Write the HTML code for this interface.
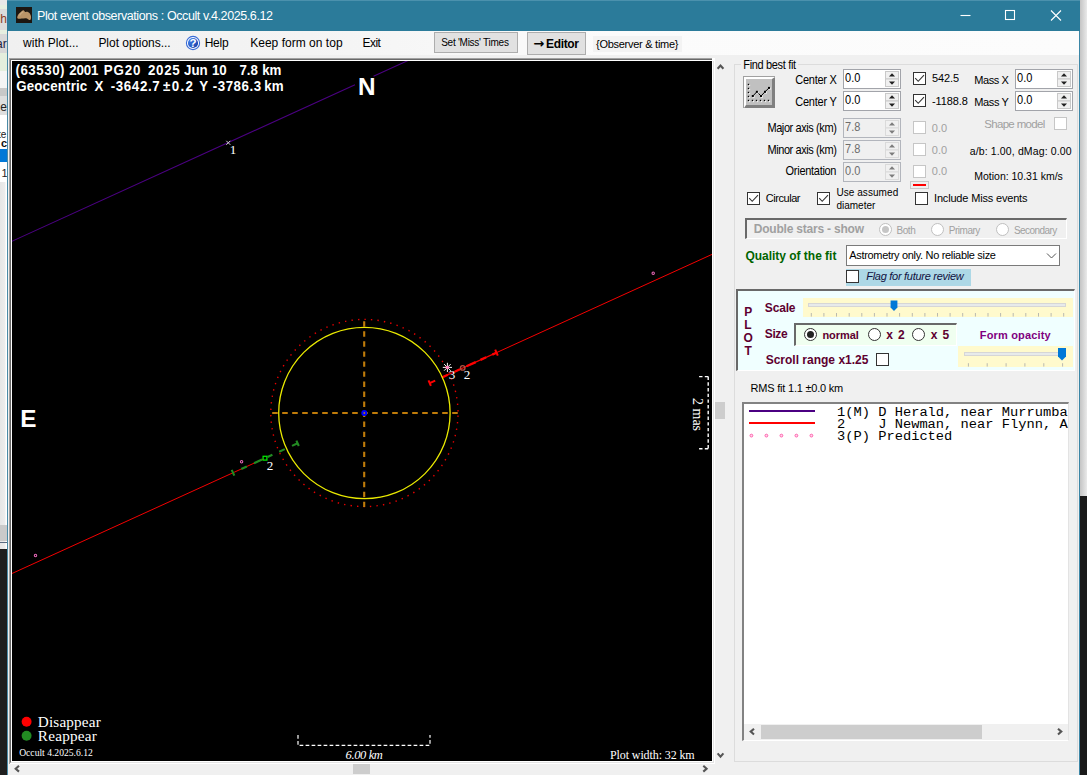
<!DOCTYPE html>
<html lang="en"><head><meta charset="utf-8"><title>Plot event observations : Occult v.4.2025.6.12</title>
<style>
html,body{margin:0;padding:0;background:#fff;}
body{width:1087px;height:783px;overflow:hidden;position:relative;}
#root{position:absolute;left:0;top:0;width:1087px;height:783px;overflow:hidden;background:#fff;}
#root div,#root svg{position:absolute;box-sizing:border-box;}
.t{position:absolute;white-space:pre;line-height:1;color:#000;}
.num{background:#fff;border:1px solid #a2a4aa;}
.num.dis{background:#f0f0f0;border-color:#b2b5bc;}
.cb{width:13px;height:13px;background:#fff;border:1px solid #333;}
.cb.dis{border-color:#c6c6c6;background:#fff;}
.rb{width:13px;height:13px;border-radius:50%;background:#fff;border:1px solid #333;}
.rb.dis{border-color:#c0c0c0;background:#fff;}
.sunk{border-style:solid;border-width:2px 1px 1px 2px;border-color:#696969 #fff #fff #696969;}

</style></head>
<body>
<div id="root">
<!-- neighbouring windows peeking at left / right edges -->
<div style="left:0;top:0;width:8px;height:549px;background:linear-gradient(90deg,#e6e6e6 0,#ececec 5px,#fff 6px,#fff 8px)"></div>
<div style="left:0;top:0;width:7px;height:5px;background:#e8e8e8"></div>
<div style="left:0;top:5px;width:7px;height:4px;background:#e6efe0"></div>
<div style="left:0;top:9px;width:7px;height:21px;background:#dcdcdc"></div>
<div style="left:0;top:30px;width:7px;height:4px;background:#e6efe0"></div>
<div style="left:0;top:34px;width:7px;height:19px;background:#d8d8d8"></div>
<div style="left:0;top:53px;width:7px;height:18px;background:#e4eedd"></div>
<div style="left:0;top:71px;width:7px;height:17px;background:#f4f4f4"></div>
<div style="left:0;top:88px;width:7px;height:8px;background:#c8c8c8"></div>
<div style="left:0;top:96px;width:7px;height:19px;background:#dedede"></div>
<div style="left:0;top:115px;width:7px;height:34px;background:#fff"></div>
<div style="left:0;top:149px;width:7px;height:13px;background:#0078d7"></div>
<div style="left:0;top:162px;width:7px;height:20px;background:#fff"></div>
<span class="t" style='left:-6.5px;top:11.5px;font:12px "Liberation Sans",Arial,sans-serif;color:#8a3b1c'>gh</span>
<span class="t" style='left:-4px;top:37px;font:12px "Liberation Sans",Arial,sans-serif;color:#1c1c40'>ar</span>
<span class="t" style='left:-2.5px;top:100px;font:12px "Liberation Sans",Arial,sans-serif;color:#222'>le</span>
<span class="t" style='left:-2px;top:128.5px;font:10px "Liberation Sans",Arial,sans-serif;color:#222'>te</span>
<span class="t" style='left:1px;top:137px;font:bold 11px "Liberation Sans",Arial,sans-serif;color:#111'>c</span>
<span class="t" style='left:1.5px;top:166.5px;font:11px "Liberation Sans",Arial,sans-serif;color:#222'>1</span>
<div style="left:0;top:525px;width:7px;height:16px;background:#cacaca"></div>
<div style="left:0;top:542px;width:7px;height:1px;background:#5a6a80"></div>
<div style="left:0;top:549px;width:8px;height:226px;background:#1e1e1e"></div>
<div style="left:1080px;top:0;width:7px;height:496px;background:linear-gradient(90deg,#c4c4c4,#e9e9e9)"></div>
<div style="left:1080px;top:496px;width:7px;height:279px;background:#1a1a1a"></div>

<!-- main window -->
<div id="win" style="left:7px;top:0;width:1073px;height:775px;background:#f0f0f0;border-left:1px solid #4a8aa6;border-right:1px solid #3b86a6"></div>
<div id="titlebar" style="left:7px;top:0;width:1073px;height:31px;background:#2b7b9a"></div>
<div id="menubar" style="left:8px;top:31px;width:1071px;height:24px;background:linear-gradient(90deg,#f0f0f0 0,#f4f4f4 300px,#fbfbfb 600px,#fcfcfc 100%)"></div>

<!-- toolbar buttons -->
<div style="left:434px;top:32px;width:84px;height:21px;background:#e1e1e1;border:1px solid #adadad"></div>
<div style="left:527px;top:32px;width:59px;height:23px;background:#e1e1e1;border:1px solid #adadad"></div>
<div style="left:593px;top:36px;width:89px;height:16px;background:#f3f3f3"></div>

<!-- plot picture box -->
<div style="left:9px;top:58px;width:706px;height:706px;background:#fff;border-top:1px solid #a0a0a0;border-left:1px solid #a0a0a0"></div>
<div style="left:10px;top:59px;width:704px;height:704px;background:#fff;border-top:1px solid #696969;border-left:1px solid #696969;border-right:1px solid #e3e3e3;border-bottom:1px solid #e3e3e3"></div>
<div style="left:712px;top:58px;width:3px;height:3px;background:#fff"></div>
<div id="plotbg" style="left:12px;top:61px;width:700px;height:700px;background:#000"></div>
<!-- plot scrollbars -->
<div style="left:715px;top:59px;width:13px;height:705px;background:#f0f0f0"></div>
<div style="left:715px;top:402px;width:10px;height:17px;background:#cdcdcd"></div>
<div style="left:10px;top:764px;width:705px;height:11px;background:#f0f0f0"></div>
<div style="left:353px;top:764px;width:17px;height:10px;background:#cdcdcd"></div>

<!-- group box -->
<div style="left:734px;top:64px;width:344px;height:698px;border:1px solid #dcdcdc"></div>
<div style="left:741px;top:60px;width:57px;height:10px;background:#f0f0f0"></div>

<!-- fit button -->
<div style="left:743px;top:76px;width:32px;height:32px;background:#a0a0a0"></div>
<div style="left:744px;top:77px;width:31px;height:31px;background:#c0c0c0;border-style:solid;border-width:2px 3px 3px 2px;border-color:#fff #808080 #808080 #fff"></div>

<!-- numeric up/downs -->
<div class="num" style="left:843px;top:69px;width:58px;height:20px"></div>
<div class="num" style="left:843px;top:91px;width:58px;height:20px"></div>
<div class="num dis" style="left:843px;top:118px;width:58px;height:20px"></div>
<div class="num dis" style="left:843px;top:140px;width:58px;height:20px"></div>
<div class="num dis" style="left:843px;top:162px;width:58px;height:20px"></div>
<div class="num" style="left:1015px;top:69px;width:58px;height:20px"></div>
<div class="num" style="left:1015px;top:91px;width:58px;height:20px"></div>

<!-- checkboxes -->
<div class="cb" style="left:913px;top:72px"></div>
<div class="cb" style="left:913px;top:94px"></div>
<div class="cb dis" style="left:913px;top:121px"></div>
<div class="cb dis" style="left:913px;top:143px"></div>
<div class="cb dis" style="left:913px;top:165px"></div>
<div class="cb dis" style="left:1054px;top:117px"></div>
<div class="cb" style="left:747px;top:192px"></div>
<div class="cb" style="left:817px;top:192px"></div>
<div class="cb" style="left:915px;top:192px"></div>
<!-- small colour swatch -->
<div style="left:910px;top:181px;width:19px;height:8px;background:#f0f0f0;border:1px solid #c8c8c8"></div>
<div style="left:913px;top:184px;width:13px;height:2px;background:#f00"></div>

<!-- double stars panel -->
<div class="sunk" style="left:745px;top:218px;width:322px;height:21px;background:#f0f0f0"></div>
<div class="rb dis" style="left:879px;top:223px"></div>
<div style="left:882px;top:226px;width:7px;height:7px;border-radius:50%;background:#c6c6c6"></div>
<div class="rb dis" style="left:931px;top:223px"></div>
<div class="rb dis" style="left:996px;top:223px"></div>

<!-- quality combo -->
<div style="left:846px;top:245px;width:214px;height:21px;background:#fff;border:1px solid #7a7a7a"></div>
<div style="left:846px;top:269px;width:125px;height:17px;background:#add8e6"></div>
<div class="cb" style="left:846px;top:270px"></div>

<!-- PLOT panel -->
<div class="sunk" style="left:736px;top:289px;width:339px;height:82px;background:#f0ffff"></div>
<div style="left:803px;top:298px;width:270px;height:19px;background:#fffacd"></div>
<div style="left:808px;top:303px;width:258px;height:4px;background:#e7eaea;border:1px solid #d6d6d6"></div>
<div class="sunk" style="left:794px;top:323px;width:163px;height:23px;background:#f0fff0"></div>
<div class="rb" style="left:804px;top:328px"></div>
<div style="left:807px;top:331px;width:7px;height:7px;border-radius:50%;background:#222"></div>
<div class="rb" style="left:868px;top:328px"></div>
<div class="rb" style="left:912px;top:328px"></div>
<div class="cb" style="left:876px;top:353px"></div>
<div style="left:958px;top:346px;width:115px;height:21px;background:#fffacd"></div>
<div style="left:964px;top:352px;width:98px;height:4px;background:#e7eaea;border:1px solid #d6d6d6"></div>

<!-- list box -->
<div style="left:742px;top:402px;width:327px;height:339px;background:#fff;border-style:solid;border-width:2px 1px 1px 2px;border-color:#828282 #e3e3e3 #fff #828282"></div>
<div style="left:744px;top:724px;width:324px;height:16px;background:#f0f0f0"></div>
<div style="left:761px;top:725px;width:221px;height:14px;background:#cdcdcd"></div>
<!--SVG-->
<svg id="ov" width="1087" height="783" viewBox="0 0 1087 783" style="left:0;top:0">
<defs><clipPath id="pc"><rect x="12" y="61" width="700" height="700"/></clipPath></defs>
<rect x="16" y="7" width="16" height="16" fill="#1c1611"/>
<path d="M17.2 17.6C17.4 15.4 18.8 13.4 20.6 12.2C21.6 11.4 22.4 10.2 23.4 10.3C24.3 10.4 24.4 11.6 25.2 12C26 12.3 26.8 11.7 27.8 11.9C29.3 12.3 30.3 13.9 30.8 15.6C31.3 17.3 31.2 19.4 30.2 20C29.2 20.5 28.2 19 27 18.5C25.4 18 23.4 18.5 21.6 18.6C20 18.7 17.2 19.4 17.2 17.6Z" fill="#b99468"/>
<path d="M19.5 15.5C20.5 13.5 22 12.3 23.3 11.6" stroke="#d2b48c" stroke-width="1.2" fill="none" opacity=".7"/>
<rect x="7" y="0" width="1073" height="1" fill="#4b91ad"/>
<g stroke="#fff" stroke-width="1.1" fill="none"><path d="M960.5 15.5H970.5"/><rect x="1005.5" y="10.5" width="9" height="9"/><path d="M1051 10.5L1061 20.5M1061 10.5L1051 20.5"/></g>
<defs><linearGradient id="hg" x1="0" y1="0" x2="1" y2="1"><stop offset="0" stop-color="#4a8af4"/><stop offset="1" stop-color="#1238a0"/></linearGradient></defs>
<circle cx="193" cy="43" r="6.6" fill="#fff" stroke="#3a6cd6" stroke-width="1.1"/><circle cx="193" cy="43" r="5.1" fill="url(#hg)"/>
<text x="193.1" y="47" font-family="Liberation Sans,Arial,sans-serif" font-size="11.5" font-weight="bold" fill="#fff" text-anchor="middle">?</text>
<g clip-path="url(#pc)" fill="none">
<path d="M10 242.2L355 84.7M373.5 76.3L410 59.6" stroke="#4b0082" stroke-width="1.05"/>
<path d="M226.3 140.8l4 4m0-4l-4 4" stroke="#d4d4d4" stroke-width="1"/>
<path d="M10 574.4L263 459.1M497 352.4L712 254.4" stroke="#f40000" stroke-width="1.0"/>
<path d="M442.0 377.5L497.0 352.4" stroke="#f40000" stroke-width="1.2"/>
<path d="M442.1 377.4L447.9 374.8M454.7 371.7L460.0 369.3M466.5 366.3L475.7 362.1M480.5 359.9L486.2 357.3M492.3 354.6L496.5 352.7" stroke="#ff0000" stroke-width="2.3"/>
<path d="M497.8 355.6L495.2 349.7" stroke="#ff0000" stroke-width="2"/>
<path d="M429.7 383.1L435.2 380.6M430.9 385.8L428.5 380.4" stroke="#ff0000" stroke-width="2"/>
<circle cx="462.7" cy="367.9" r="2.25" stroke="#b05040" stroke-width="1.4"/>
<path d="M241.3 469.0L246.8 466.5M254.0 463.2L262.0 459.5M267.6 457.0L272.4 454.8M279.2 451.7L284.8 449.1M292.0 445.9L297.6 443.3M234.3 475.7L231.7 469.8M298.8 446.0L296.4 440.6" stroke="#228b22" stroke-width="2.1"/>
<rect x="263.1" y="456.3" width="3.8" height="3.8" stroke="#00e400" stroke-width="1.3"/>
<circle cx="653.2" cy="273.2" r="1.2" stroke="#e868b8" stroke-width="1.05"/>
<circle cx="241.6" cy="461.7" r="1.2" stroke="#e868b8" stroke-width="1.05"/>
<circle cx="35.5" cy="555.5" r="1.2" stroke="#e868b8" stroke-width="1.05"/>
<circle cx="364.4" cy="413" r="85.7" stroke="#eaea00" stroke-width="1.3"/>
<circle cx="364.4" cy="413" r="93.6" stroke="#e80000" stroke-width="1.4" stroke-dasharray="1.4 5.135" stroke-dashoffset="-2.567"/>
<path d="M272.2 413H458.4" stroke="#c07c0a" stroke-width="2.1" stroke-dasharray="5.55 4.45"/>
<path d="M364.2 321.3V507" stroke="#c07c0a" stroke-width="2.1" stroke-dasharray="5.4 4.63"/>
<circle cx="364.3" cy="413" r="3" fill="#0000ff"/><circle cx="364.3" cy="413" r="0.9" fill="#c07c0a"/>
<path d="M442.8 367.4L452.0 367.4M444.1 364.1L450.7 370.7M447.4 362.8L447.4 372.0M450.7 364.1L444.1 370.7" stroke="#f4f4f4" stroke-width="1"/><circle cx="447.5" cy="367.5" r="1.7" fill="#ff7fbf"/>
<circle cx="26.6" cy="721.7" r="4.95" fill="#ff0000"/><circle cx="26.6" cy="735.7" r="4.95" fill="#228b22"/>
<path d="M298 735V745.4H430V735" stroke="#fff" stroke-width="1.2" stroke-dasharray="3.7 2.3"/>
<path d="M708.2 376.6V448.7M708.2 376.6H698.5M708.2 448.7H698.5" stroke="#fff" stroke-width="1.4" stroke-dasharray="3.4 2.3"/>
</g>
<g stroke="#555" stroke-width="2.1" fill="none"><path d="M717.6 68.8l2.9-3.3l2.9 3.3"/><path d="M717.6 753.4l2.9 3.3l2.9-3.3"/><path d="M19 765.8l-3.3 2.9l3.3 2.9"/><path d="M703.3 765.8l3.3 2.9l-3.3 2.9"/><path d="M754 728.7l-3.3 2.9l3.3 2.9"/><path d="M1058 728.7l3.3 2.9l-3.3 2.9"/></g>
<rect x="885.5" y="71.5" width="13" height="7.5" fill="#f0f0f0" stroke="#c9c9c9"/><rect x="885.5" y="79" width="13" height="7.5" fill="#f0f0f0" stroke="#c9c9c9"/><path d="M889 76.6l3-3.4l3 3.4z" fill="#202020"/><path d="M889 81.4l3 3.4l3-3.4z" fill="#202020"/>
<rect x="885.5" y="93.5" width="13" height="7.5" fill="#f0f0f0" stroke="#c9c9c9"/><rect x="885.5" y="101" width="13" height="7.5" fill="#f0f0f0" stroke="#c9c9c9"/><path d="M889 98.6l3-3.4l3 3.4z" fill="#202020"/><path d="M889 103.4l3 3.4l3-3.4z" fill="#202020"/>
<rect x="885.5" y="120.5" width="13" height="7.5" fill="#f0f0f0" stroke="#dadada"/><rect x="885.5" y="128" width="13" height="7.5" fill="#f0f0f0" stroke="#dadada"/><path d="M889 125.6l3-3.4l3 3.4z" fill="#7c7c7c"/><path d="M889 130.4l3 3.4l3-3.4z" fill="#7c7c7c"/>
<rect x="885.5" y="142.5" width="13" height="7.5" fill="#f0f0f0" stroke="#dadada"/><rect x="885.5" y="150" width="13" height="7.5" fill="#f0f0f0" stroke="#dadada"/><path d="M889 147.6l3-3.4l3 3.4z" fill="#7c7c7c"/><path d="M889 152.4l3 3.4l3-3.4z" fill="#7c7c7c"/>
<rect x="885.5" y="164.5" width="13" height="7.5" fill="#f0f0f0" stroke="#dadada"/><rect x="885.5" y="172" width="13" height="7.5" fill="#f0f0f0" stroke="#dadada"/><path d="M889 169.6l3-3.4l3 3.4z" fill="#7c7c7c"/><path d="M889 174.4l3 3.4l3-3.4z" fill="#7c7c7c"/>
<rect x="1057.5" y="71.5" width="13" height="7.5" fill="#f0f0f0" stroke="#c9c9c9"/><rect x="1057.5" y="79" width="13" height="7.5" fill="#f0f0f0" stroke="#c9c9c9"/><path d="M1061 76.6l3-3.4l3 3.4z" fill="#202020"/><path d="M1061 81.4l3 3.4l3-3.4z" fill="#202020"/>
<rect x="1057.5" y="93.5" width="13" height="7.5" fill="#f0f0f0" stroke="#c9c9c9"/><rect x="1057.5" y="101" width="13" height="7.5" fill="#f0f0f0" stroke="#c9c9c9"/><path d="M1061 98.6l3-3.4l3 3.4z" fill="#202020"/><path d="M1061 103.4l3 3.4l3-3.4z" fill="#202020"/>
<path d="M915.2 78.2l3 3.1l5.8-6.2" stroke="#333" stroke-width="1.1" fill="none"/>
<path d="M915.2 100.2l3 3.1l5.8-6.2" stroke="#333" stroke-width="1.1" fill="none"/>
<path d="M749.2 198.2l3 3.1l5.8-6.2" stroke="#333" stroke-width="1.1" fill="none"/>
<path d="M819.2 198.2l3 3.1l5.8-6.2" stroke="#333" stroke-width="1.1" fill="none"/>
<rect x="748.4" y="84.4" width="1.7" height="1.7" fill="#fff"/><rect x="747.8" y="83.8" width="1.4" height="1.4" fill="#000"/><rect x="748.4" y="88.4" width="1.7" height="1.7" fill="#fff"/><rect x="747.8" y="87.8" width="1.4" height="1.4" fill="#000"/><rect x="748.4" y="92.4" width="1.7" height="1.7" fill="#fff"/><rect x="747.8" y="91.8" width="1.4" height="1.4" fill="#000"/><rect x="748.4" y="96.4" width="1.7" height="1.7" fill="#fff"/><rect x="747.8" y="95.8" width="1.4" height="1.4" fill="#000"/><rect x="748.4" y="100.4" width="1.7" height="1.7" fill="#fff"/><rect x="747.8" y="99.8" width="1.4" height="1.4" fill="#000"/><rect x="752.4" y="100.4" width="1.7" height="1.7" fill="#fff"/><rect x="751.8" y="99.8" width="1.4" height="1.4" fill="#000"/><rect x="756.4" y="100.4" width="1.7" height="1.7" fill="#fff"/><rect x="755.8" y="99.8" width="1.4" height="1.4" fill="#000"/><rect x="760.4" y="100.4" width="1.7" height="1.7" fill="#fff"/><rect x="759.8" y="99.8" width="1.4" height="1.4" fill="#000"/><rect x="764.4" y="100.4" width="1.7" height="1.7" fill="#fff"/><rect x="763.8" y="99.8" width="1.4" height="1.4" fill="#000"/><rect x="768.4" y="100.4" width="1.7" height="1.7" fill="#fff"/><rect x="767.8" y="99.8" width="1.4" height="1.4" fill="#000"/>
<path d="M752.8 96L756.9 91.8L761 96L765 91.8L769 87.9" stroke="#000" stroke-width="1" fill="none"/>
<rect x="752.6" y="95.8" width="2" height="2" fill="#fff" opacity=".8"/><rect x="751.8" y="95.0" width="2" height="2" fill="#000"/><rect x="756.7" y="91.6" width="2" height="2" fill="#fff" opacity=".8"/><rect x="755.9" y="90.8" width="2" height="2" fill="#000"/><rect x="760.8" y="95.8" width="2" height="2" fill="#fff" opacity=".8"/><rect x="760.0" y="95.0" width="2" height="2" fill="#000"/><rect x="764.8" y="91.6" width="2" height="2" fill="#fff" opacity=".8"/><rect x="764.0" y="90.8" width="2" height="2" fill="#000"/><rect x="768.8" y="87.7" width="2" height="2" fill="#fff" opacity=".8"/><rect x="768.0" y="86.9" width="2" height="2" fill="#000"/>
<path d="M1047 253.5l4.5 4.5l4.5-4.5" stroke="#555" stroke-width="1" fill="none"/>
<path d="M811.3 313V316.6M823.9 313V316.6M836.5 313V316.6M849.2 313V316.6M861.8 313V316.6M874.4 313V316.6M887.0 313V316.6M899.6 313V316.6M912.3 313V316.6M924.9 313V316.6M937.5 313V316.6M950.1 313V316.6M962.7 313V316.6M975.4 313V316.6M988.0 313V316.6M1000.6 313V316.6M1013.2 313V316.6M1025.8 313V316.6M1038.5 313V316.6M1051.1 313V316.6M1063.7 313V316.6" stroke="#b9b9b0" stroke-width="1"/>
<path d="M968.4 363.2V366.6M987.2 363.2V366.6M1006.1 363.2V366.6M1024.9 363.2V366.6M1043.8 363.2V366.6M1062.6 363.2V366.6" stroke="#b9b9b0" stroke-width="1"/>
<path d="M890.6 300.6h6.8v7l-3.4 3.4l-3.4-3.4z" fill="#0078d7"/>
<path d="M1058 348h8v8.4l-4 4l-4-4z" fill="#0078d7"/>
<path d="M749 411H815" stroke="#4b0082" stroke-width="2"/><path d="M749 423H815" stroke="#ff0000" stroke-width="2"/>
<circle cx="751.4" cy="435.6" r="1.4" stroke="#ff5fae" stroke-width="1" fill="#ffd6ea"/>
<circle cx="766.4" cy="435.6" r="1.4" stroke="#ff5fae" stroke-width="1" fill="#ffd6ea"/>
<circle cx="781.4" cy="435.6" r="1.4" stroke="#ff5fae" stroke-width="1" fill="#ffd6ea"/>
<circle cx="796.4" cy="435.6" r="1.4" stroke="#ff5fae" stroke-width="1" fill="#ffd6ea"/>
<circle cx="811.4" cy="435.6" r="1.4" stroke="#ff5fae" stroke-width="1" fill="#ffd6ea"/>
</svg>

<span class="t" style='left:37px;top:9px;font:12.5px "Liberation Sans", Arial, sans-serif;letter-spacing:-0.402px;color:#fff;'>Plot event observations : Occult v.4.2025.6.12</span>
<span class="t" style='left:23px;top:36px;font:12px "Liberation Sans", Arial, sans-serif;letter-spacing:0.031px;'>with Plot...</span>
<span class="t" style='left:98.4px;top:36px;font:12px "Liberation Sans", Arial, sans-serif;letter-spacing:-0.03px;'>Plot options...</span>
<span class="t" style='left:204.7px;top:36px;font:12px "Liberation Sans", Arial, sans-serif;letter-spacing:-0.262px;'>Help</span>
<span class="t" style='left:250.2px;top:36px;font:12px "Liberation Sans", Arial, sans-serif;letter-spacing:0.023px;'>Keep form on top</span>
<span class="t" style='left:362.6px;top:36px;font:12px "Liberation Sans", Arial, sans-serif;letter-spacing:-0.605px;'>Exit</span>
<span class="t" style='left:441.2px;top:36.6px;font:10px "Liberation Sans", Arial, sans-serif;letter-spacing:-0.261px;'>Set 'Miss' Times</span>
<span class="t" style='left:533.3px;top:36.3px;font:13px "DejaVu Sans", sans-serif;font-weight:bold;'>→</span>
<span class="t" style='left:546px;top:37px;font:12px "Liberation Sans", Arial, sans-serif;letter-spacing:-0.334px;font-weight:bold;'>Editor</span>
<span class="t" style='left:596px;top:38px;font:11px "Liberation Sans", Arial, sans-serif;letter-spacing:-0.271px;'>{Observer &amp; time}</span>
<span class="t" style='left:15.5px;top:63.0px;font:13.33px "Liberation Sans", Arial, sans-serif;letter-spacing:0.508px;color:#fff;font-weight:bold;transform:scaleY(1.1);transform-origin:0 84.65%;'>(63530)</span>
<span class="t" style='left:69.3px;top:63.0px;font:13.33px "Liberation Sans", Arial, sans-serif;letter-spacing:-0.219px;color:#fff;font-weight:bold;transform:scaleY(1.1);transform-origin:0 84.65%;'>2001</span>
<span class="t" style='left:103.8px;top:63.0px;font:13.33px "Liberation Sans", Arial, sans-serif;letter-spacing:0.835px;color:#fff;font-weight:bold;transform:scaleY(1.1);transform-origin:0 84.65%;'>PG20</span>
<span class="t" style='left:148px;top:63.0px;font:13.33px "Liberation Sans", Arial, sans-serif;letter-spacing:0.681px;color:#fff;font-weight:bold;transform:scaleY(1.1);transform-origin:0 84.65%;'>2025</span>
<span class="t" style='left:184.05px;top:63.0px;font:13.33px "Liberation Sans", Arial, sans-serif;color:#fff;font-weight:bold;transform:scaleY(1.1);transform-origin:0 84.65%;'>Jun</span>
<span class="t" style='left:211.94px;top:63.0px;font:13.33px "Liberation Sans", Arial, sans-serif;color:#fff;font-weight:bold;transform:scaleY(1.1);transform-origin:0 84.65%;'>10</span>
<span class="t" style='left:239.38px;top:63.0px;font:13.33px "Liberation Sans", Arial, sans-serif;color:#fff;font-weight:bold;transform:scaleY(1.1);transform-origin:0 84.65%;'>7.8</span>
<span class="t" style='left:262.17px;top:63.0px;font:13.33px "Liberation Sans", Arial, sans-serif;color:#fff;font-weight:bold;transform:scaleY(1.1);transform-origin:0 84.65%;'>km</span>
<span class="t" style='left:16.2px;top:78.8px;font:13.33px "Liberation Sans", Arial, sans-serif;letter-spacing:0.162px;color:#fff;font-weight:bold;transform:scaleY(1.1);transform-origin:0 84.65%;'>Geocentric</span>
<span class="t" style='left:94.55px;top:78.8px;font:13.33px "Liberation Sans", Arial, sans-serif;color:#fff;font-weight:bold;transform:scaleY(1.1);transform-origin:0 84.65%;'>X</span>
<span class="t" style='left:110.7px;top:78.8px;font:13.33px "Liberation Sans", Arial, sans-serif;letter-spacing:0.63px;color:#fff;font-weight:bold;transform:scaleY(1.1);transform-origin:0 84.65%;'>-3642.7</span>
<span class="t" style='left:163.1px;top:78.8px;font:13.33px "Liberation Sans", Arial, sans-serif;letter-spacing:1.285px;color:#fff;font-weight:bold;transform:scaleY(1.1);transform-origin:0 84.65%;'>±0.2</span>
<span class="t" style='left:199.35px;top:78.8px;font:13.33px "Liberation Sans", Arial, sans-serif;color:#fff;font-weight:bold;transform:scaleY(1.1);transform-origin:0 84.65%;'>Y</span>
<span class="t" style='left:212.8px;top:78.8px;font:13.33px "Liberation Sans", Arial, sans-serif;letter-spacing:0.514px;color:#fff;font-weight:bold;transform:scaleY(1.1);transform-origin:0 84.65%;'>-3786.3</span>
<span class="t" style='left:264.22px;top:78.8px;font:13.33px "Liberation Sans", Arial, sans-serif;color:#fff;font-weight:bold;transform:scaleY(1.1);transform-origin:0 84.65%;'>km</span>
<span class="t" style='left:358.05px;top:73.2px;font:24.3px "Liberation Sans", Arial, sans-serif;color:#fff;font-weight:bold;'>N</span>
<span class="t" style='left:20.3px;top:404.5px;font:24.3px "Liberation Sans", Arial, sans-serif;color:#fff;font-weight:bold;'>E</span>
<span class="t" style='left:229.8px;top:141.9px;font:13.1px "Liberation Serif", "Times New Roman", serif;color:#fff;'>1</span>
<span class="t" style='left:448.7px;top:367.3px;font:13.1px "Liberation Serif", "Times New Roman", serif;color:#fff;'>3</span>
<span class="t" style='left:463.7px;top:367.3px;font:13.1px "Liberation Serif", "Times New Roman", serif;color:#fff;'>2</span>
<span class="t" style='left:266.7px;top:458.1px;font:13.1px "Liberation Serif", "Times New Roman", serif;color:#fff;'>2</span>
<span class="t" style='left:37.8px;top:712.7px;font:15.2px "Liberation Serif", "Times New Roman", serif;letter-spacing:0.165px;color:#fff;'>Disappear</span>
<span class="t" style='left:37.8px;top:726.7px;font:15.2px "Liberation Serif", "Times New Roman", serif;letter-spacing:0.251px;color:#fff;'>Reappear</span>
<span class="t" style='left:19.2px;top:747.4px;font:9.6px "Liberation Serif", "Times New Roman", serif;color:#fff;'>Occult 4.2025.6.12</span>
<span class="t" style='left:345.5px;top:747.8px;font:12.5px "Liberation Serif", "Times New Roman", serif;letter-spacing:-0.363px;color:#fff;font-style:italic;'>6.00 km</span>
<span class="t" style='left:610px;top:748px;font:12px "Liberation Serif", "Times New Roman", serif;letter-spacing:-0.103px;color:#fff;'>Plot width: 32 km</span>
<span class="t" style='left:743.3px;top:58.6px;font:11px "Liberation Sans", Arial, sans-serif;letter-spacing:-0.338px;transform:scaleY(1.09);transform-origin:0 84.65%;'>Find best fit</span>
<span class="t" style='left:795.3px;top:74px;font:11px "Liberation Sans", Arial, sans-serif;letter-spacing:-0.275px;transform:scaleY(1.09);transform-origin:0 84.65%;'>Center X</span>
<span class="t" style='left:795.3px;top:95.7px;font:11px "Liberation Sans", Arial, sans-serif;letter-spacing:-0.246px;transform:scaleY(1.09);transform-origin:0 84.65%;'>Center Y</span>
<span class="t" style='left:767.4px;top:122.2px;font:11px "Liberation Sans", Arial, sans-serif;letter-spacing:-0.412px;transform:scaleY(1.09);transform-origin:0 84.65%;'>Major axis (km)</span>
<span class="t" style='left:767.4px;top:144px;font:11px "Liberation Sans", Arial, sans-serif;letter-spacing:-0.412px;transform:scaleY(1.09);transform-origin:0 84.65%;'>Minor axis (km)</span>
<span class="t" style='left:785.6px;top:165.4px;font:11px "Liberation Sans", Arial, sans-serif;letter-spacing:-0.291px;transform:scaleY(1.09);transform-origin:0 84.65%;'>Orientation</span>
<span class="t" style='left:845.1px;top:72px;font:11px "Liberation Sans", Arial, sans-serif;transform:scaleY(1.09);transform-origin:0 84.65%;'>0.0</span>
<span class="t" style='left:845.1px;top:94px;font:11px "Liberation Sans", Arial, sans-serif;transform:scaleY(1.09);transform-origin:0 84.65%;'>0.0</span>
<span class="t" style='left:845.1px;top:121px;font:11px "Liberation Sans", Arial, sans-serif;color:#6d6d6d;transform:scaleY(1.09);transform-origin:0 84.65%;'>7.8</span>
<span class="t" style='left:845.1px;top:143px;font:11px "Liberation Sans", Arial, sans-serif;color:#6d6d6d;transform:scaleY(1.09);transform-origin:0 84.65%;'>7.8</span>
<span class="t" style='left:845.1px;top:165px;font:11px "Liberation Sans", Arial, sans-serif;color:#6d6d6d;transform:scaleY(1.09);transform-origin:0 84.65%;'>0.0</span>
<span class="t" style='left:932px;top:72.4px;font:11px "Liberation Sans", Arial, sans-serif;letter-spacing:-0.133px;transform:scaleY(1.06);transform-origin:0 84.65%;'>542.5</span>
<span class="t" style='left:932px;top:94.5px;font:11px "Liberation Sans", Arial, sans-serif;letter-spacing:-0.117px;transform:scaleY(1.06);transform-origin:0 84.65%;'>-1188.8</span>
<span class="t" style='left:931.85px;top:121.7px;font:11px "Liberation Sans", Arial, sans-serif;color:#a0a0a0;transform:scaleY(1.06);transform-origin:0 84.65%;'>0.0</span>
<span class="t" style='left:931.85px;top:143.8px;font:11px "Liberation Sans", Arial, sans-serif;color:#a0a0a0;transform:scaleY(1.06);transform-origin:0 84.65%;'>0.0</span>
<span class="t" style='left:931.85px;top:165.4px;font:11px "Liberation Sans", Arial, sans-serif;color:#a0a0a0;transform:scaleY(1.06);transform-origin:0 84.65%;'>0.0</span>
<span class="t" style='left:974.3px;top:74px;font:11px "Liberation Sans", Arial, sans-serif;letter-spacing:-0.438px;'>Mass X</span>
<span class="t" style='left:974.3px;top:95.7px;font:11px "Liberation Sans", Arial, sans-serif;letter-spacing:-0.397px;'>Mass Y</span>
<span class="t" style='left:1017.1px;top:72px;font:11px "Liberation Sans", Arial, sans-serif;transform:scaleY(1.09);transform-origin:0 84.65%;'>0.0</span>
<span class="t" style='left:1017.1px;top:94px;font:11px "Liberation Sans", Arial, sans-serif;transform:scaleY(1.09);transform-origin:0 84.65%;'>0.0</span>
<span class="t" style='left:984.2px;top:117.8px;font:11.5px "Liberation Sans", Arial, sans-serif;letter-spacing:-0.668px;color:#a0a0a0;'>Shape model</span>
<span class="t" style='left:969.8px;top:144.7px;font:10.5px "Liberation Sans", Arial, sans-serif;letter-spacing:0.127px;'>a/b: 1.00, dMag: 0.00</span>
<span class="t" style='left:974.3px;top:169.6px;font:10.5px "Liberation Sans", Arial, sans-serif;letter-spacing:-0.013px;'>Motion: 10.31 km/s</span>
<span class="t" style='left:765.7px;top:192.3px;font:11px "Liberation Sans", Arial, sans-serif;letter-spacing:-0.444px;transform:scaleY(1.05);transform-origin:0 84.65%;'>Circular</span>
<span class="t" style='left:836.4px;top:186.7px;font:10px "Liberation Sans", Arial, sans-serif;letter-spacing:0.066px;'>Use assumed</span>
<span class="t" style='left:836.4px;top:200px;font:10px "Liberation Sans", Arial, sans-serif;letter-spacing:0.013px;'>diameter</span>
<span class="t" style='left:934px;top:192.3px;font:11px "Liberation Sans", Arial, sans-serif;letter-spacing:-0.173px;transform:scaleY(1.06);transform-origin:0 84.65%;'>Include Miss events</span>
<span class="t" style='left:753.7px;top:222px;font:12px "Liberation Sans", Arial, sans-serif;letter-spacing:-0.207px;font-weight:bold;color:#a0a0a0;'>Double stars - show</span>
<span class="t" style='left:896.5px;top:225px;font:10px "Liberation Sans", Arial, sans-serif;letter-spacing:-0.459px;color:#a0a0a0;'>Both</span>
<span class="t" style='left:948.8px;top:225px;font:10px "Liberation Sans", Arial, sans-serif;letter-spacing:-0.492px;color:#a0a0a0;'>Primary</span>
<span class="t" style='left:1014px;top:225px;font:10px "Liberation Sans", Arial, sans-serif;letter-spacing:-0.564px;color:#a0a0a0;'>Secondary</span>
<span class="t" style='left:745.4px;top:248.5px;font:12px "Liberation Sans", Arial, sans-serif;letter-spacing:-0.02px;font-weight:bold;color:#006400;'>Quality of the fit</span>
<span class="t" style='left:849.2px;top:248.7px;font:11px "Liberation Sans", Arial, sans-serif;letter-spacing:-0.316px;transform:scaleY(1.06);transform-origin:0 84.65%;'>Astrometry only. No reliable size</span>
<span class="t" style='left:866.2px;top:270.2px;font:11px "Liberation Sans", Arial, sans-serif;letter-spacing:-0.273px;font-style:italic;color:#101040;'>Flag for future review</span>
<span class="t" style='left:744.2px;top:304.6px;font:12px "Liberation Sans", Arial, sans-serif;font-weight:bold;color:#5e0030;'>P</span>
<span class="t" style='left:744.2px;top:317.9px;font:12px "Liberation Sans", Arial, sans-serif;font-weight:bold;color:#5e0030;'>L</span>
<span class="t" style='left:743.6px;top:330.6px;font:12px "Liberation Sans", Arial, sans-serif;font-weight:bold;color:#5e0030;'>O</span>
<span class="t" style='left:744.4px;top:343.5px;font:12px "Liberation Sans", Arial, sans-serif;font-weight:bold;color:#5e0030;'>T</span>
<span class="t" style='left:764.8px;top:300.5px;font:12px "Liberation Sans", Arial, sans-serif;letter-spacing:-0.165px;font-weight:bold;color:#5e0030;'>Scale</span>
<span class="t" style='left:764.8px;top:326.6px;font:12px "Liberation Sans", Arial, sans-serif;letter-spacing:-0.405px;font-weight:bold;color:#5e0030;'>Size</span>
<span class="t" style='left:765.7px;top:352.6px;font:12px "Liberation Sans", Arial, sans-serif;font-weight:bold;color:#5e0030;'>Scroll range x1.25</span>
<span class="t" style='left:822.4px;top:328.8px;font:11px "Liberation Sans", Arial, sans-serif;letter-spacing:-0.058px;font-weight:bold;color:#5e0030;'>normal</span>
<span class="t" style='left:886.3px;top:327.8px;font:12px "Liberation Sans", Arial, sans-serif;font-weight:bold;color:#5e0030;word-spacing:1.6px;'>x 2</span>
<span class="t" style='left:930.85px;top:327.8px;font:12px "Liberation Sans", Arial, sans-serif;font-weight:bold;color:#5e0030;word-spacing:1.6px;'>x 5</span>
<span class="t" style='left:979.8px;top:328.8px;font:11px "Liberation Sans", Arial, sans-serif;letter-spacing:0.166px;font-weight:bold;color:#800080;'>Form opacity</span>
<span class="t" style='left:750.6px;top:382.4px;font:11px "Liberation Sans", Arial, sans-serif;letter-spacing:-0.212px;transform:scaleY(1.06);transform-origin:0 84.65%;'>RMS fit 1.1 ±0.0 km</span>
<span class="t" style='left:837.3px;top:405.6px;font:12px "Liberation Mono", "Courier New", monospace;transform:scaleX(1.144);transform-origin:0 0;'>1(M) D Herald, near Murrumba</span>
<span class="t" style='left:837.3px;top:417.6px;font:12px "Liberation Mono", "Courier New", monospace;transform:scaleX(1.144);transform-origin:0 0;'>2    J Newman, near Flynn, A</span>
<span class="t" style='left:837.3px;top:429.6px;font:12px "Liberation Mono", "Courier New", monospace;transform:scaleX(1.144);transform-origin:0 0;'>3(P) Predicted</span>
<span class="t" style='left:704.7px;top:397.5px;font:14px "Liberation Serif","Times New Roman",serif;color:#fff;transform-origin:0 0;transform:rotate(90deg)'>2 mas</span>
</div>
</body></html>
